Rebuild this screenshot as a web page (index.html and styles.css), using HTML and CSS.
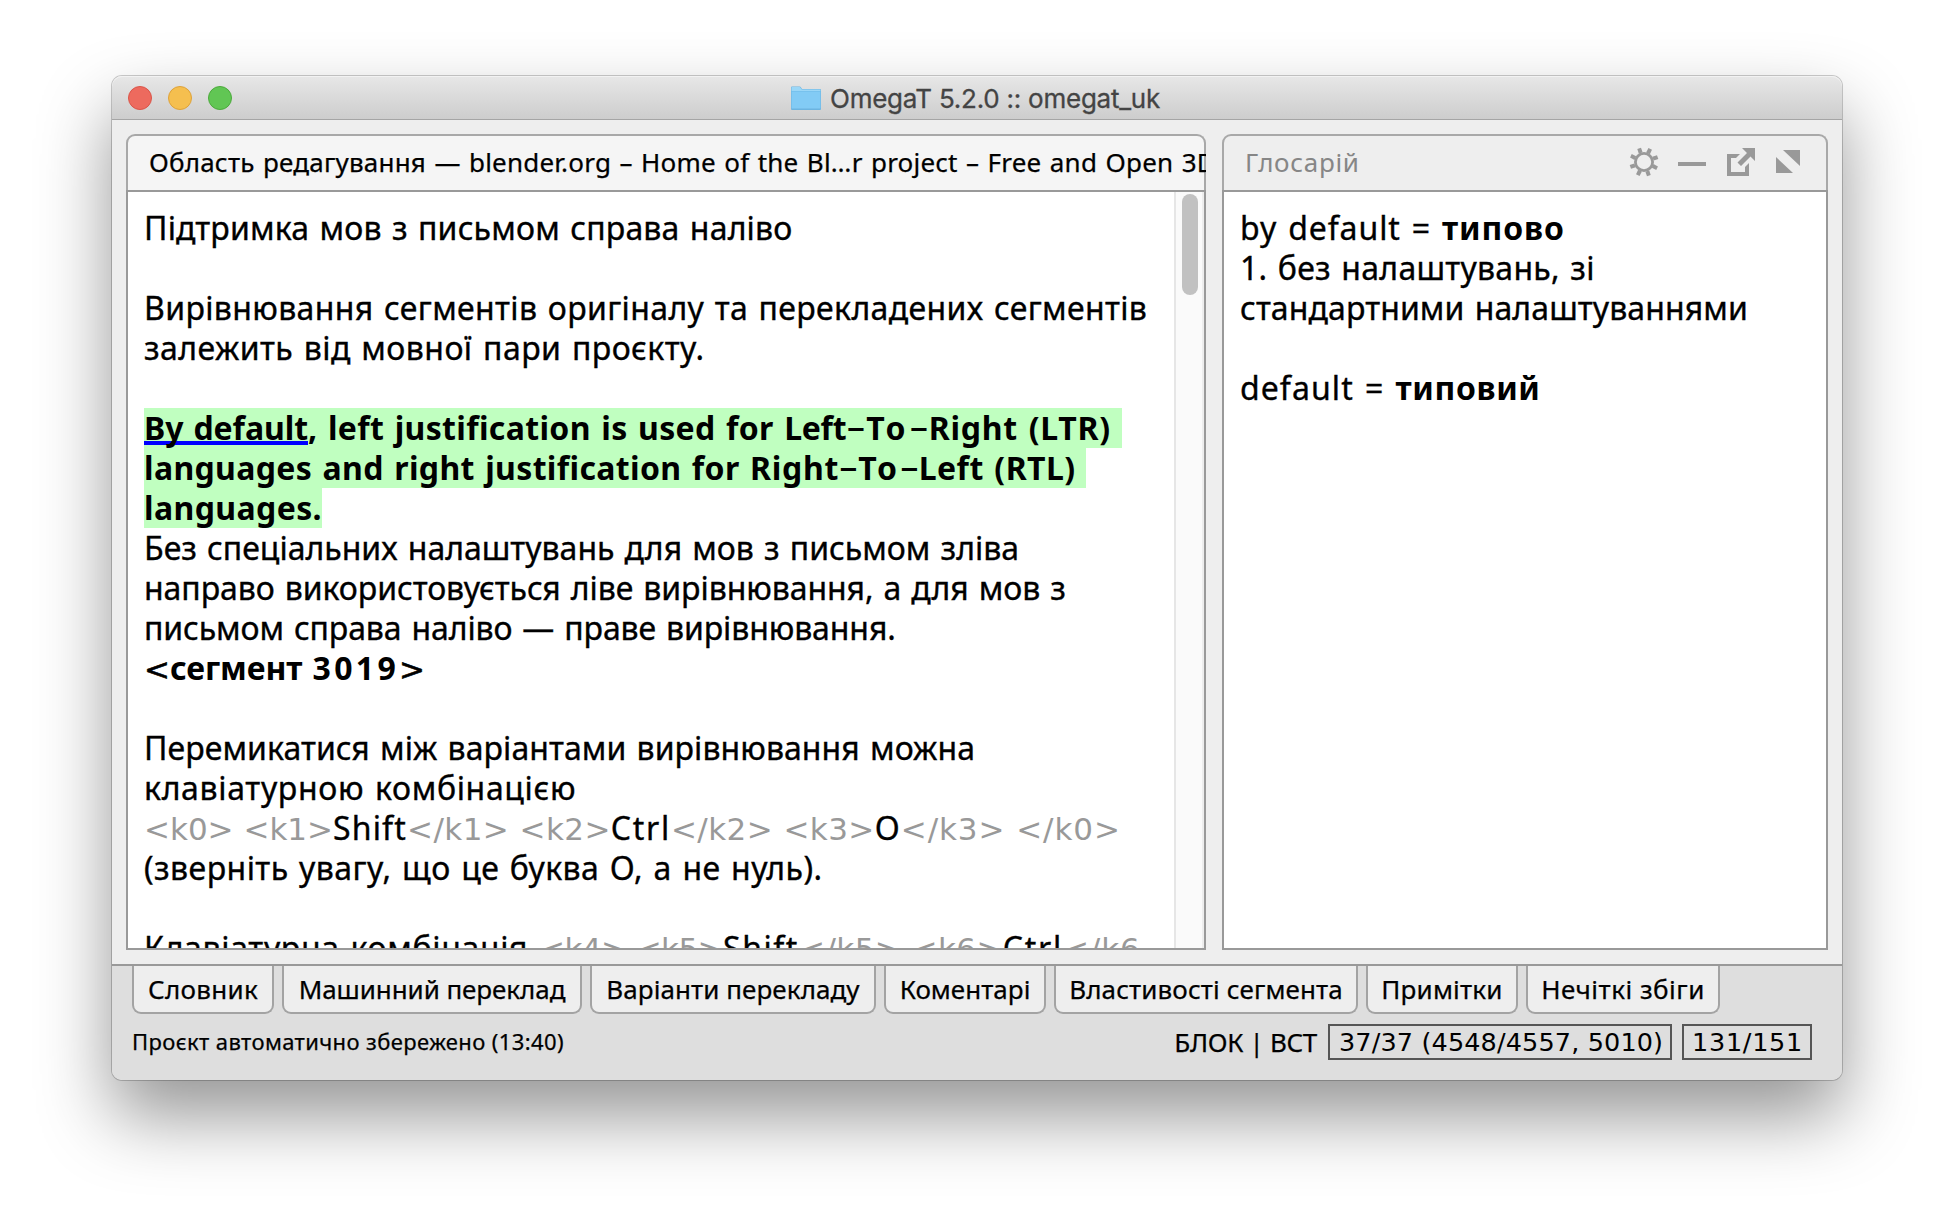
FILE: index.html
```
<!DOCTYPE html>
<html lang="uk">
<head>
<meta charset="utf-8">
<title>OmegaT 5.2.0 :: omegat_uk</title>
<link rel="stylesheet" href="styles.css">
</head>
<body>
<div class="window">
  <header class="titlebar">
    <div class="lights"><i class="light close"></i><i class="light minimize"></i><i class="light zoom"></i></div>
    <div class="title">
      <svg class="folder" viewBox="0 0 30 25" width="30" height="25">
        <path d="M0 1.5Q0 .5 1 .5H8.5Q9.5 .5 10 1.5L11 3H29Q30 3 30 4V23Q30 24 29 24H1Q0 24 0 23Z" fill="#6cb4e0"/>
        <path d="M.5 1.5Q.5 1 1 1H8.5Q9.2 1 9.7 2L10.700 3.5H29Q29.5 3.5 29.5 4V6H.5Z" fill="#9bd7f7"/>
        <path d="M.5 6H29.5V22.5H.5Z" fill="#82cbf5"/>
        <path d="M0 5.2H30V6H0Z" fill="#6fbdeb"/>
      </svg>
      <span class="title-text">OmegaT 5.2.0 :: omegat_uk</span>
    </div>
  </header>

  <main class="workspace">
    <section class="panel editor">
      <h2 class="panel-head active"><span class="panel-title">Область редагування — blender.org – Home of the Bl…r project – Free and Open 3D</span></h2>
      <div class="panel-body">
        <div class="text">
          <p class="t1">Підтримка мов з письмом справа наліво</p>
          <p></p>
          <p class="t2">Вирівнювання сегментів оригіналу та перекладених сегментів</p>
          <p class="t3">залежить від мовної пари проєкту.</p>
          <p></p>
          <p class="source"><span class="hl"><u>By default</u><span class="s1">, left justification is used for </span><span class="s2">Left</span><i class="hy">-</i><span class="s3">To</span><i class="hy">-</i><span class="s4">Right (LTR) </span></span></p>
          <p class="source"><span class="hl"><span class="s1">languages and right justification for </span><span class="s4">Right</span><i class="hy hy-narrow">-</i><span class="s5">To</span><i class="hy hy-narrow">-</i><span class="s6">Left (RTL) </span></span></p>
          <p class="source"><span class="hl s7">languages.</span></p>
          <p class="t4">Без спеціальних налаштувань для мов з письмом зліва</p>
          <p class="t5">направо використовується ліве вирівнювання, а для мов з</p>
          <p class="t6">письмом справа наліво — праве вирівнювання.</p>
          <p class="marker"><span class="br">&lt;</span>сегмент <span class="num">3019</span><span class="br">&gt;</span></p>
          <p></p>
          <p class="t7">Перемикатися між варіантами вирівнювання можна</p>
          <p class="t8">клавіатурною комбінацією</p>
          <p><span class="tag open">&lt;k0&gt; &lt;k1&gt;</span><span class="shift">Shift</span><span class="tag">&lt;/k1&gt; &lt;k2&gt;</span><span class="ctrl">Ctrl</span><span class="tag">&lt;/k2&gt; &lt;k3&gt;</span><span class="key-o">O</span><span class="tag last">&lt;/k3&gt; &lt;/k0&gt;</span></p>
          <p class="t3">(зверніть увагу, що це буква O, а не нуль).</p>
          <p></p>
          <p class="t8">Клавіатурна комбінація <span class="tag tight">&lt;k4&gt; &lt;k5&gt;</span><span class="shift wide">Shift</span><span class="tag">&lt;/k5&gt; &lt;k6&gt;</span><span class="ctrl">Ctrl</span><span class="tag last">&lt;/k6</span></p>
        </div>
        <div class="scrollbar"><div class="thumb"></div></div>
      </div>
    </section>

    <section class="panel glossary">
      <h2 class="panel-head"><span class="panel-title">Глосарій</span>
        <svg class="tools" viewBox="0 0 170 28" width="170" height="28" fill="#999">
          <defs><path id="tooth" d="M7.300 1l3.7-1.300 1.600 4.600-3.800 1.500z"/></defs>
          <path fill-rule="evenodd" d="M14 4a10 10 0 1 1 0 20a10 10 0 1 1 0-20zM14 6.800a7.200 7.200 0 1 0 0 14.400a7.200 7.200 0 1 0 0-14.400z"/>
          <use href="#tooth"/><use href="#tooth" transform="rotate(45 14 14)"/><use href="#tooth" transform="rotate(90 14 14)"/><use href="#tooth" transform="rotate(135 14 14)"/><use href="#tooth" transform="rotate(180 14 14)"/><use href="#tooth" transform="rotate(225 14 14)"/><use href="#tooth" transform="rotate(270 14 14)"/><use href="#tooth" transform="rotate(315 14 14)"/>
          <path d="M48 14h28v4H48z"/>
          <path d="M97 6h13l-4 4h-5v14h14v-5l4-4v13H97z"/>
          <path d="M112 0h13v13l-4.500-4.500L111 18l-3.500-3.500L117 5z"/>
          <path d="M153 2h17v16z"/><path d="M146 9l17 16h-17z"/>
        </svg>
      </h2>
      <div class="panel-body">
        <div class="text">
          <p><span class="g1">by default = </span><b class="g2">типово</b></p>
          <p class="g3">1. без налаштувань, зі</p>
          <p class="g4">стандартними налаштуваннями</p>
          <p></p>
          <p><span class="g5">default = </span><b class="g6">типовий</b></p>
        </div>
      </div>
    </section>
  </main>

  <footer class="footer">
    <nav class="tabs">
      <span class="tab tab-1">Словник</span><span class="tab tab-2">Машинний переклад</span><span class="tab tab-3">Варіанти перекладу</span><span class="tab tab-4">Коментарі</span><span class="tab tab-5">Властивості сегмента</span><span class="tab tab-6">Примітки</span><span class="tab tab-7">Нечіткі збіги</span>
    </nav>
    <div class="status">
      <span class="message">Проєкт автоматично збережено (13:40)</span>
      <span class="mode">БЛОК | ВСТ</span>
      <span class="counter progress">37/37 (4548/4557, 5010)</span>
      <span class="counter length">131/151</span>
    </div>
  </footer>
</div>
</body>
</html>
```
FILE: styles.css
```
* { box-sizing: border-box; margin: 0; padding: 0; }
body {
  width: 1954px;
  height: 1228px;
  padding: 76px 112px 148px;
  background: #fff;
  overflow: hidden;
  font-family: "Noto Sans", "Open Sans", sans-serif;
  color: #000;
}
.window {
  display: flex;
  flex-direction: column;
  height: 1004px;
  border-radius: 10px;
  background: #eee;
  box-shadow: 0 0 0 1px rgba(0, 0, 0, .2), 0 36px 72px rgba(0, 0, 0, .42);
}

/* Title bar */
.titlebar {
  position: relative;
  display: flex;
  align-items: center;
  justify-content: center;
  height: 44px;
  padding: 1px 3px 0 0;
  border-bottom: 1px solid #a5a5a5;
  border-radius: 10px 10px 0 0;
  background: linear-gradient(#e7e7e7, #cdcdcd);
  box-shadow: inset 0 1px #f2f2f2;
}
.lights { position: absolute; left: 16px; top: 10px; display: flex; gap: 16px; }
.light { width: 24px; height: 24px; border: 1px solid; border-radius: 50%; }
.close { background: #ed6a5e; border-color: #da5549; }
.minimize { background: #f5bf4f; border-color: #dea23a; }
.zoom { background: #61c654; border-color: #4caa3c; }
.title { display: flex; align-items: center; gap: 9px; }
.title-text {
  margin-top: 2px;
  font: 400 26px/42px Inter, sans-serif;
  letter-spacing: -.242px;
  color: #444;
  -webkit-text-stroke: .3px;
}

/* Docked panels */
.workspace { display: flex; gap: 16px; height: 844px; padding: 14px; }
.panel { display: flex; flex-direction: column; height: 816px; }
.editor { width: 1080px; }
.glossary { width: 606px; }
.panel-head {
  display: flex;
  align-items: center;
  justify-content: space-between;
  height: 56px;
  padding-left: 21px;
  border: 2px solid #a8a8a8;
  border-bottom: 0;
  border-radius: 9px 9px 0 0;
  background: #eee;
  font-size: 26px;
  font-weight: 400;
  line-height: 54px;
  color: #868686;
  white-space: nowrap;
}
.active { background: #f5f5f5; color: #000; letter-spacing: .21px; word-spacing: 1.4px; -webkit-text-stroke: .25px; }
.panel-title { margin-top: -2px; }
.active .panel-title { flex: 1; margin-right: -2px; overflow: hidden; }
.glossary .panel-title { letter-spacing: .7px; }
.tools { margin-right: 26px; margin-top: -2px; overflow: visible; }
.panel-body {
  display: flex;
  height: 760px;
  border: 2px solid #999;
  background: #fff;
  overflow: hidden;
}
.text {
  flex: 1;
  padding: 16px 0 0 16px;
  font-size: 32px;
  line-height: 40px;
  word-spacing: 1.8px;
  -webkit-text-stroke: .35px;
}
.text p { height: 40px; white-space: pre; }

/* Tracking of the body lines */
.t1 { letter-spacing: .178px; }
.t2 { letter-spacing: .357px; }
.t3 { letter-spacing: .44px; }
.t4 { letter-spacing: .004px; }
.t5 { letter-spacing: -.065px; }
.t6 { letter-spacing: -.11px; }
.t7 { letter-spacing: .065px; }
.t8 { letter-spacing: .665px; }
.s1 { letter-spacing: .34px; }
.s2 { letter-spacing: -.316px; }
.s3 { letter-spacing: 3.133px; }
.s4 { letter-spacing: .74px; }
.s5 { letter-spacing: 2.633px; }
.s6 { letter-spacing: .45px; }
.s7 { letter-spacing: .391px; }
.g1 { letter-spacing: .9px; }
.g2 { letter-spacing: .9px; }
.g3 { letter-spacing: .27px; }
.g4 { letter-spacing: .1px; }
.g5 { letter-spacing: 1.07px; }
.g6 { letter-spacing: .627px; }

/* Active segment */
.source, .marker, b { font-weight: 700; -webkit-text-stroke: 0; }
.marker { letter-spacing: -.07px; }
.num { letter-spacing: 3.32px; }
.hl { display: inline-block; height: 40px; background: #c0ffc0; }
.hl u {
  letter-spacing: -.078px;
  text-decoration: underline #00f 4px;
  text-underline-offset: 1px;
  text-decoration-skip-ink: none;
}
.hy { display: inline-block; width: 20px; font-style: normal; text-align: center; transform: scale(1.8, .7); }
.hy-narrow { width: 19px; }

/* Inline tags and shortcut keys */
.tag, .br { font-family: "DejaVu Sans", sans-serif; font-size: 31px; font-weight: 400; line-height: 1; word-spacing: 0; }
.tag { color: #999; letter-spacing: .43px; -webkit-text-stroke: 0; }
.open { letter-spacing: -.012px; }
.tight { letter-spacing: -.568px; }
.last { letter-spacing: .92px; }
.br { letter-spacing: 0; -webkit-text-stroke: .6px; }
.shift { letter-spacing: 1.166px; }
.wide { letter-spacing: 1.566px; }
.ctrl { letter-spacing: 1.688px; }
.key-o { letter-spacing: 1px; }

.scrollbar {
  width: 30px;
  padding: 0 4px 0 6px;
  border-left: 2px solid #e6e6e6;
  border-right: 2px solid #ededed;
  background: #fafafa;
}
.thumb { width: 16px; height: 101px; margin-top: 2px; border-radius: 8px; background: #c1c1c1; }

/* Hidden panel tabs and status line */
.footer {
  height: 116px;
  border-top: 2px solid #999;
  border-radius: 0 0 10px 10px;
  background: #dedede;
  -webkit-text-stroke: .25px;
}
.tabs { display: flex; gap: 8px; padding-left: 20px; }
.tab {
  height: 48px;
  border: 2px solid #a3a3a3;
  border-top: 0;
  border-radius: 0 0 9px 9px;
  background: #eee;
  font-size: 26px;
  line-height: 47px;
  text-align: center;
  white-space: nowrap;
}
.tab-1 { width: 142px; letter-spacing: .313px; }
.tab-2 { width: 300px; letter-spacing: -.072px; }
.tab-3 { width: 286px; letter-spacing: .07px; }
.tab-4 { width: 162px; letter-spacing: .027px; }
.tab-5 { width: 304px; letter-spacing: .117px; }
.tab-6 { width: 152px; letter-spacing: .202px; }
.tab-7 { width: 194px; letter-spacing: .494px; }
.status {
  display: flex;
  height: 46px;
  padding: 10px 30px 0 20px;
  font-size: 26px;
  line-height: 36px;
  white-space: nowrap;
}
.message { font-size: 22px; line-height: 35px; letter-spacing: .395px; }
.mode { margin-left: auto; margin-right: 11px; letter-spacing: -.326px; }
.counter {
  height: 36px;
  padding-left: 9px;
  border: 2px solid #555;
  font-family: "DejaVu Sans", sans-serif;
  font-size: 25.5px;
  line-height: 33px;
  -webkit-text-stroke: 0;
}
.progress { width: 344px; margin-right: 10px; letter-spacing: .14px; }
.length { width: 130px; padding-left: 8px; letter-spacing: .723px; }
```
